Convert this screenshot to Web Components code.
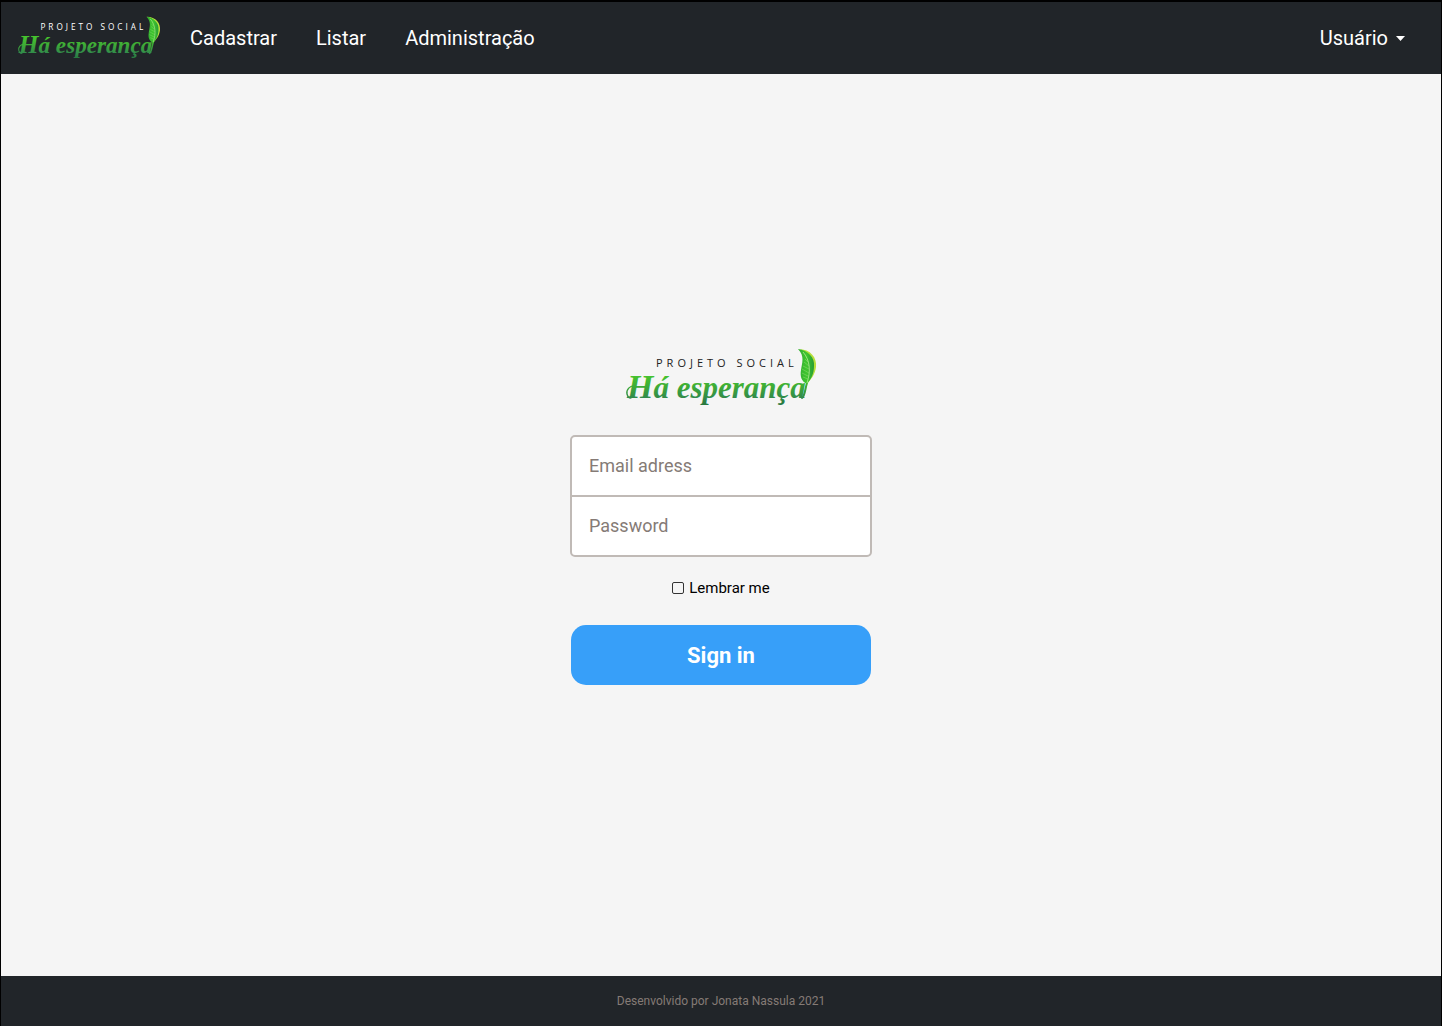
<!DOCTYPE html>
<html lang="pt-BR">
<head>
<meta charset="utf-8">
<meta name="viewport" content="width=device-width, initial-scale=1">
<title>Projeto Social Há esperança</title>
<style>
  body { margin: 0; font-family: Roboto, "Liberation Sans", sans-serif; background: #000; }
</style>
</head>
<body>
<app-shell>
  <site-header slot="header">
    <nav-link href="#cadastrar">Cadastrar</nav-link>
    <nav-link href="#listar">Listar</nav-link>
    <nav-link href="#administracao">Administração</nav-link>
    <user-menu slot="user">Usuário</user-menu>
  </site-header>
  <sign-in-form></sign-in-form>
  <site-footer slot="footer">Desenvolvido por Jonata Nassula 2021</site-footer>
</app-shell>
<script>
  const define = (name, html, setup) => {
    const template = document.createElement('template');
    template.innerHTML = html;
    customElements.define(name, class extends HTMLElement {
      constructor() {
        super();
        this.attachShadow({ mode: 'open' }).append(template.content.cloneNode(true));
      }
      connectedCallback() { if (setup) setup(this, this.shadowRoot); }
    });
  };

  define('app-shell', `
    <style>
      :host { display: flex; flex-direction: column; min-height: 100vh; box-sizing: border-box;
              border: solid #000; border-width: 2px 1px 0; background: #f5f5f5; }
      main { flex: 1; display: flex; flex-direction: column; align-items: center;
             justify-content: center; padding-bottom: 17px; }
    </style>
    <slot name="header"></slot>
    <main><slot></slot></main>
    <slot name="footer"></slot>`);

  define('brand-logo', `
    <style>
      :host { display: block; width: 190px; color: #222; }
      svg { display: block; width: 100%; height: auto; overflow: visible; }
      .tag { font: 11px "Open Sans", sans-serif; letter-spacing: 4px; fill: currentColor; }
      .name { font: italic bold 31px "Liberation Serif", serif; fill: url(#ink); }
      .initial { font-size: 34px; }
      .swash { fill: none; stroke: url(#ink); stroke-width: 1.4; stroke-linecap: round; }
    </style>
    <svg viewBox="0 0 190 60" role="img" aria-label="Projeto Social Há esperança">
      <defs>
        <linearGradient id="ink" gradientUnits="userSpaceOnUse" x1="0" y1="24" x2="0" y2="58">
          <stop offset="0" stop-color="#48cb2b"/>
          <stop offset=".4" stop-color="#3fae35"/>
          <stop offset=".75" stop-color="#328b4b"/>
          <stop offset="1" stop-color="#25733c"/>
        </linearGradient>
        <linearGradient id="leaf" x1="0" y1="0" x2="1" y2="0">
          <stop offset="0" stop-color="#30ac32"/>
          <stop offset=".55" stop-color="#3fc52e"/>
          <stop offset="1" stop-color="#279b36"/>
        </linearGradient>
      </defs>
      <text class="tag" x="30" y="19">PROJETO SOCIAL</text>
      <text class="name" x="1" y="50"><tspan class="initial">H</tspan>á esperança</text>
      <path class="swash" d="M9 38C4 37 0 42 1 46C2 50 4 51 6 49"/>
      <path class="swash" style="stroke-width:2" d="M176 50C179 48 179 41 181 35"/>
      <path fill="#b7df3b" d="M172 1C185 1 191 10 190 19C189 27 185 31 181 36C185 28 188 22 186 14C184 7 180 3 172 1Z"/>
      <path fill="url(#leaf)" d="M172 1C182 2 189 10 188 18C188 26 185 31 181 36C175 33 174 28 175 22C176 15 179 8 172 1Z"/>
      <path fill="none" stroke="#c3f0a0" stroke-width=".7" d="M177 4C184 12 185 23 181 35"/>
      <path fill="none" stroke="#a8e984" stroke-width=".4" d="M182 14L179 11M183 18L178 14M183 21L177 18M183 25L176 21M182 28L176 25M182 31L177 29"/>
    </svg>`);

  define('site-header', `
    <style>
      :host { display: flex; align-items: center; min-height: 72px; box-sizing: border-box;
              padding: 0 36px 0 17px; background: #212529; color: #fff; }
      brand-logo { width: 142px; color: #fff; }
      nav { display: flex; flex: 1; gap: 39px; margin-left: 30px; }
    </style>
    <brand-logo></brand-logo>
    <nav><slot></slot></nav>
    <slot name="user"></slot>`);

  define('nav-link', `
    <style>
      :host { display: block; }
      a { color: inherit; text-decoration: none; font-size: 20px; line-height: 24px; }
      a:hover { text-decoration: underline; }
    </style>
    <a><slot></slot></a>`,
    (host, root) => { root.querySelector('a').href = host.getAttribute('href'); });

  define('user-menu', `
    <style>
      :host { display: block; }
      button { display: flex; align-items: center; gap: 8px; padding: 0; border: 0; background: none;
               color: inherit; font: inherit; font-size: 20px; line-height: 24px; cursor: pointer; }
      svg { display: block; }
    </style>
    <button type="button" aria-haspopup="true"><slot></slot>
      <svg width="9" height="5" viewBox="0 0 9 5" aria-hidden="true"><path fill="currentColor" d="M0 0H9L4.500 5Z"/></svg>
    </button>`);

  define('sign-in-form', `
    <style>
      :host { display: block; width: 302px; max-width: 100%; }
      form { display: flex; flex-direction: column; align-items: center; }
      .fields { align-self: stretch; margin-top: 27px; border: 2px solid #c0bab6; border-radius: 5px;
                background: #fff; overflow: hidden; }
      .fields input { display: block; width: 100%; height: 58px; box-sizing: border-box; padding: 0 17px 2px;
                      border: 0; outline-offset: -2px; background: none; font: inherit; font-size: 18px; color: #222; }
      .fields input + input { height: 60px; border-top: 2px solid #c0bab6; }
      input::placeholder { color: #857b76; opacity: 1; }
      label { display: flex; align-items: center; gap: 5px; margin: 21px 0 27px;
              font-size: 15px; line-height: 20px; color: #000; }
      label input { appearance: none; width: 12px; height: 12px; margin: 0;
                    border: 1px solid #333; border-radius: 2px; }
      label input:checked { background: #379ff9; }
      button { width: 300px; max-width: 100%; height: 60px; border: 0; border-radius: 15px; background: #379ff9;
               color: #fff; font: inherit; font-size: 22px; font-weight: 700; cursor: pointer; }
    </style>
    <form>
      <brand-logo></brand-logo>
      <div class="fields">
        <input type="email" placeholder="Email adress" aria-label="Email adress">
        <input type="password" placeholder="Password" aria-label="Password">
      </div>
      <label for="remember"><input id="remember" type="checkbox">Lembrar me</label>
      <button type="submit">Sign in</button>
    </form>`);

  define('site-footer', `
    <style>
      :host { display: flex; align-items: center; justify-content: center; min-height: 50px;
              background: #212529; color: #857b76; font-size: 12px; line-height: 16px; }
    </style>
    <slot></slot>`);
</script>
</body>
</html>
